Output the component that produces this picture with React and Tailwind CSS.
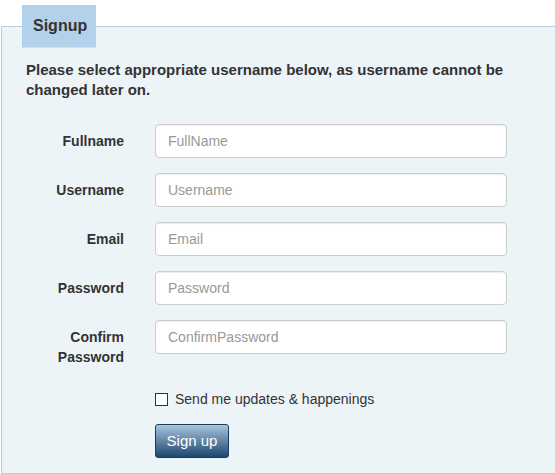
import { useState } from 'react'

const fields = [
  { label: 'Fullname', ph: 'FullName' },
  { label: 'Username', ph: 'Username' },
  { label: 'Email', ph: 'Email' },
  { label: 'Password', ph: 'Password', type: 'password' },
  { label: ['Confirm', 'Password'], ph: 'ConfirmPassword', type: 'password' },
]

export default function App() {
  const [checked, setChecked] = useState(false)
  return (
    <div className="w-[555px] h-[474px] overflow-hidden bg-white font-['Liberation_Sans',Arial,sans-serif] text-[#333]">
      <div className="relative ml-px mt-[26px] w-[556px] h-[448px] border border-[#b5d1e8] bg-[#edf4f8]">
        {/* tab */}
        <div className="absolute left-[20px] top-[-22px] w-[74px] h-[43px] bg-[#b3d1ea] border-b border-[#d8dde2] pl-[11px] flex items-center">
          <span className="text-[16px] font-bold leading-5">Signup</span>
        </div>

        <p className="ml-[24px] mt-[33px] w-[500px] text-[15px] font-bold leading-5">
          Please select appropriate username below, as username cannot be changed later on.
        </p>

        <div className="mt-[24px] flex flex-col gap-[15px]">
          {fields.map((f, i) => (
            <div key={i} className="flex items-start">
              <label className="w-[122px] pt-[7px] text-right text-[14px] font-bold leading-5">
                {Array.isArray(f.label) ? f.label.map(l => <div key={l}>{l}</div>) : f.label}
              </label>
              <input
                type={f.type || 'text'}
                placeholder={f.ph}
                className="ml-[31px] w-[352px] h-[34px] rounded-[4px] border border-[#ccc] bg-white pl-[12px] text-[14px] outline-none shadow-[inset_0_1px_1px_rgba(0,0,0,0.075)] placeholder:text-[#999]"
              />
            </div>
          ))}
        </div>

        <label className="ml-[153px] mt-[22px] flex items-center gap-[7px] text-[14px] leading-5 cursor-pointer w-fit" onClick={() => setChecked(c => !c)}>
          <span className="w-[13px] h-[13px] border border-[#333] bg-white flex items-center justify-center text-[10px] leading-none">{checked ? '✓' : ''}</span>
          <span>Send me updates &amp; happenings</span>
        </label>

        <button className="ml-[153px] mt-[15px] w-[74px] h-[34px] rounded-[3px] border border-[#173d5e] bg-gradient-to-b from-[#aac5de] to-[#1c4870] text-white text-[15px] leading-5">
          Sign up
        </button>
      </div>
    </div>
  )
}
